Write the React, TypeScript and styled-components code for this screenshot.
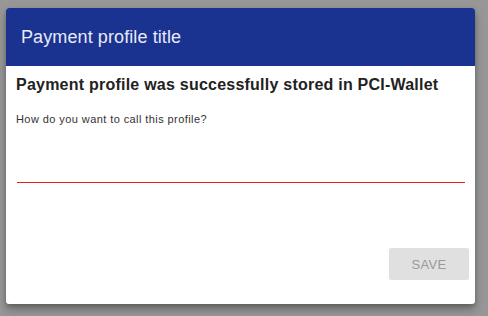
import React from "react";
import styled, { createGlobalStyle } from "styled-components";

const Global = createGlobalStyle`
  html, body { margin: 0; padding: 0; }
  body {
    background: #979797;
    font-family: "Liberation Sans", Arial, Helvetica, sans-serif;
    width: 488px;
    height: 316px;
    overflow: hidden;
  }
`;

const Backdrop = styled.div`
  padding: 8px 0 0 6px;
`;

const Dialog = styled.div`
  width: 469px;
  height: 296px;
  background: #ffffff;
  border-radius: 3px;
  box-shadow: 0 6px 10px rgba(0, 0, 0, 0.25), 0 2px 4px rgba(0, 0, 0, 0.2);
  display: flex;
  flex-direction: column;
  overflow: hidden;
`;

const Header = styled.div`
  height: 58px;
  background: #1a3390;
  display: flex;
  align-items: center;
  padding: 0 15px;
  flex-shrink: 0;
`;

const Title = styled.h2`
  margin: 0;
  font-size: 18px;
  font-weight: 400;
  color: #e8eaf6;
  letter-spacing: 0.1px;
`;

const Body = styled.div`
  flex: 1;
  display: flex;
  flex-direction: column;
  padding: 9px 10px 0 10px;
`;

const Heading = styled.h3`
  margin: 0;
  font-size: 16px;
  font-weight: 700;
  color: #222;
  line-height: 20px;
  letter-spacing: 0.23px;
`;

const Label = styled.label`
  margin-top: 17px;
  font-size: 11px;
  color: #333;
  letter-spacing: 0.42px;
  line-height: 14px;
`;

const Input = styled.input`
  margin: 30px 0 0 1px;
  width: 448px;
  height: 26px;
  border: none;
  border-bottom: 1px solid #ee1c1c;
  outline: none;
  padding: 0;
  background: transparent;
  font-family: inherit;
  font-size: 14px;
`;

const Actions = styled.div`
  margin-top: auto;
  display: flex;
  justify-content: flex-end;
  padding: 0 6px 24px 0;
  margin-right: -10px;
`;

const Button = styled.button`
  width: 80px;
  height: 32px;
  border: none;
  border-radius: 2px;
  background: #e0e0e0;
  color: #9a9a9a;
  font-family: inherit;
  font-size: 13px;
  font-weight: 400;
  text-transform: uppercase;
  letter-spacing: 0.3px;
  cursor: default;
`;

export default function App() {
  return (
    <>
      <Global />
      <Backdrop>
        <Dialog>
          <Header>
            <Title>Payment profile title</Title>
          </Header>
          <Body>
            <Heading>Payment profile was successfully stored in PCI-Wallet</Heading>
            <Label>How do you want to call this profile?</Label>
            <Input aria-label="Profile name" />
            <Actions>
              <Button disabled>Save</Button>
            </Actions>
          </Body>
        </Dialog>
      </Backdrop>
    </>
  );
}
